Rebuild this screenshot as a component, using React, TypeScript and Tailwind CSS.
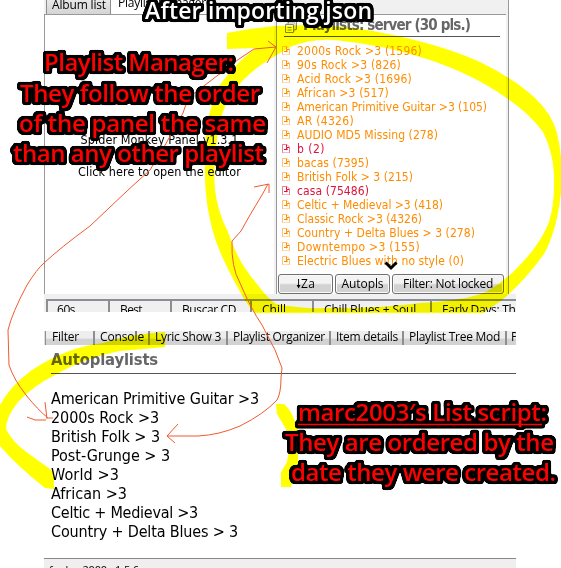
import { useLayoutEffect, useRef } from 'react';

const tahoma = "font-['DejaVu_Sans_Condensed','DejaVu_Sans',sans-serif]";
const segoe = "font-['Open_Sans','Noto_Sans',sans-serif]";

/** Text whose tracking is adjusted so that it spans a given width. */
function Fit({ w, text, className = '' }: { w: number; text: string; className?: string }) {
  const ref = useRef<HTMLSpanElement>(null);
  useLayoutEffect(() => {
    const el = ref.current;
    if (!el) return;
    el.style.letterSpacing = '0px';
    const natural = el.getBoundingClientRect().width;
    el.style.letterSpacing = `${(w - natural) / text.length}px`;
  }, [w, text]);
  return (
    <span ref={ref} className={`inline-block whitespace-pre ${className}`}>
      {text}
    </span>
  );
}

const playlists: [string, number, boolean?][] = [
  ['2000s Rock >3 (1596)', 125],
  ['90s Rock >3 (826)', 104],
  ['Acid Rock >3 (1696)', 115],
  ['African >3 (517)', 92],
  ['American Primitive Guitar >3 (105)', 190],
  ['AR (4326)', 57],
  ['AUDIO MD5 Missing (278)', 141],
  ['b (2)', 28, true],
  ['bacas (7395)', 72],
  ['British Folk > 3 (215)', 116],
  ['casa (75486)', 72, true],
  ['Celtic + Medieval >3 (418)', 146],
  ['Classic Rock >3 (4326)', 125],
  ['Country + Delta Blues > 3 (278)', 178],
  ['Downtempo >3 (155)', 123],
  ['Electric Blues with no style (0)', 167],
];

const autoplaylists: [string, number][] = [
  ['American Primitive Guitar >3', 208],
  ['2000s Rock >3', 108],
  ['British Folk > 3', 109],
  ['Post-Grunge > 3', 119],
  ['World >3', 68],
  ['African >3', 76],
  ['Celtic + Medieval >3', 147],
  ['Country + Delta Blues > 3', 187],
];

function FileIcon() {
  return (
    <svg className="mr-[7px] h-[9px] w-[8px] shrink-0" viewBox="0 0 8 9" fill="none" stroke="currentColor">
      <path d="M.5 8.5V.5H5L7.500 3V8.5" strokeOpacity=".55" />
      <path d="M4.500 1V3.500H7M2 5.500H5.500" />
      <path d="M4 3.500L6 5L4 6.500Z" fill="currentColor" stroke="none" />
      <path d="M0 8.500H8" strokeOpacity=".3" />
    </svg>
  );
}

function StackIcon() {
  return (
    <svg className="mt-[6px] h-3 w-3 shrink-0" viewBox="0 0 12 12" fill="none" stroke="#888">
      <path d="M3.500 2.500V.5H11.500V8.500H9.500M.5 3.500H8.500V11.500H.5ZM2.500 6.500H6.500M2.500 9H6.500" />
      <path d="M2 3V2H10V10H9" strokeOpacity=".6" />
    </svg>
  );
}

function PanelButton({ width, label, w }: { width: string; label: string; w: number }) {
  return (
    <button
      className={`${width} ${segoe} flex h-[20px] items-center justify-center rounded-[3px] border border-[#707070] bg-linear-to-b from-[#f3f3f3] from-45% to-[#d2d2d2] to-55% text-[12px] leading-none text-black shadow-[inset_0_0_0_1px_#fafafa]`}
    >
      <Fit w={w} text={label} />
    </button>
  );
}

const bottomTabs: [string, string, number][] = [
  ['60s', 'w-[62px] pl-[9px]', 18],
  ['Best', 'w-[62px] pl-[10px]', 22],
  ['Buscar CD', 'w-[80px] pl-[10px]', 54],
  ['Chill', 'w-[62px] pl-[10px]', 24],
  ['Chill Blues + Soul', 'w-[118px] pl-[10px]', 92],
  ['Early Days: The', 'w-[88px] pl-[10px]', 80],
];

const panelTabs: [string, string, number][] = [
  ['Filter', 'w-[48px] pl-[6px]', 27],
  ['Console', 'w-[55px] pl-[5px]', 44],
  ['Lyric Show 3', 'w-[78px] pl-[5px]', 66],
  ['Playlist Organizer', 'w-[103px] pl-[5px]', 92],
  ['Item details', 'w-[73px] pl-[5px]', 62],
  ['Playlist Tree Mod', 'w-[103px] pl-[5px]', 91],
  ['P', 'w-[11px] pl-[4px]', 7],
];

const captions: [string, number, number, number][] = [
  ['Playlist Manager:', 44, 71, 190],
  ['They follow the order', 20, 101.5, 240],
  ['of the panel the same', 19, 131.5, 247],
  ['than any other playlist', 13, 162, 251],
  ['marc2003′s List script:', 298, 421, 249],
  ['They are ordered by the', 285, 451, 269],
  ['date they were created.', 291, 481, 265],
];

export default function App() {
  return (
    <main className="relative isolate flex h-[568px] w-[561px] flex-col overflow-hidden bg-white text-black">
      {/* Upper window */}
      <section className="ml-[44px] flex h-[313px] w-[472px] flex-col overflow-hidden">
        <div className={`${segoe} flex h-[14px] w-[465px] border-r border-[#999] bg-[#f0f0f0] pl-[2px] text-[12px]`}>
          <div className="flex h-full w-[65px] border-x border-[#8c8e96] bg-linear-to-b from-[#e8e8e8] to-[#d4d4d4] pl-[5px] leading-[10px]">
            <Fit w={54} text="Album list" />
          </div>
          <div className="h-full w-[102px] border-r border-[#8c8e96] bg-white pl-[7px] leading-[6px]">
            <Fit w={88} text="Playlist Manager" />
          </div>
        </div>
        <div className="flex h-[281px]">
          <div className={`${tahoma} flex w-[230px] flex-col items-center border-l border-t border-[#999] pt-[109px] text-[12.5px] leading-[32px]`}>
            <Fit w={158} text="Spider Monkey Panel v1.3.1" />
            <Fit w={163} text="Click here to open the editor" />
          </div>
          <div className="w-[2px] bg-[#f0f0f0]" />
          <div className="flex w-[230px] flex-col border-l border-t border-[#999]">
            <header className="ml-[7px] flex h-[22px] w-[216px] border-b border-[#555] pl-[1px]">
              <StackIcon />
              <h2 className={`${tahoma} ml-[6px] pt-[1px] text-[15px] font-bold leading-[18px] text-[#666]`}>
                <Fit w={167} text="Playlists: server (30 pls.)" />
              </h2>
            </header>
            <ul className={`${tahoma} ml-[5px] pt-[7px] text-[12px]`}>
              {playlists.map(([name, w, locked]) => (
                <li key={name} className={`flex h-[14px] items-center leading-[14px] ${locked ? 'text-[#dc143c]' : 'text-[#ff8c00]'}`}>
                  <FileIcon />
                  <Fit w={w} text={name} />
                </li>
              ))}
            </ul>
            <div className="ml-px mt-[6px] flex gap-[2px]">
              <PanelButton width="w-[55px]" label="🠗Za" w={20} />
              <PanelButton width="w-[55px]" label="Autopls" w={42} />
              <PanelButton width="w-[112px]" label="Filter: Not locked" w={90} />
            </div>
          </div>
          <div className="w-[3px] border-r border-[#999] bg-[#f0f0f0]" />
        </div>
        <div className="flex h-[18px] flex-col bg-[#f0f0f0] pl-[2px] pt-[5px]">
          <div className={`${segoe} flex h-[13px] overflow-hidden border-t-2 border-[#8c8e96] text-[12px] leading-[18px]`}>
            {bottomTabs.map(([name, cls, w]) => (
              <div key={name} className={`${cls} shrink-0 overflow-hidden border-l-2 border-[#8c8e96] bg-[#f0f0f0]`}>
                <Fit w={w} text={name} />
              </div>
            ))}
          </div>
        </div>
      </section>

      {/* Lower window */}
      <section className="ml-[44px] mt-[19px] flex w-[472px] flex-col">
        <nav className={`${segoe} flex h-[14px] overflow-hidden bg-[#dedede] text-[12px] leading-[11px]`}>
          {panelTabs.map(([name, cls, w], i) => (
            <div
              key={name}
              className={`${cls} shrink-0 overflow-hidden bg-linear-to-b from-[#eee] from-50% to-[#d2d2d2] to-60% ${i === 0 ? 'ml-px border-l border-[#8c8e96]' : 'border-l-2 border-[#8c8e96]'}`}
            >
              <Fit w={w} text={name} />
            </div>
          ))}
        </nav>
        <h1 className={`${tahoma} ml-[7px] h-[29px] border-b border-[#555] pt-[5px] text-[16.5px] font-bold leading-[20px] text-[#666]`}>
          <Fit w={107} text="Autoplaylists" />
        </h1>
        <ul className={`${tahoma} ml-[7px] pt-[15px] text-[16px] leading-[19px]`}>
          {autoplaylists.map(([name, w]) => (
            <li key={name} className="h-[19px]">
              <Fit w={w} text={name} />
            </li>
          ))}
        </ul>
        <footer className={`${segoe} mt-[17px] h-[10px] overflow-hidden border-t border-[#888] bg-[#f0eeee] pl-[5px] pt-[4px] text-[11px] leading-[14px]`}>
          <Fit w={90} text="foobar2000 v1.5.6" />
        </footer>
      </section>

      {/* Highlighter marks */}
      <svg className="pointer-events-none absolute inset-0 mix-blend-multiply" width="561" height="568" fill="#ff0">
        <path
          fillRule="evenodd"
          d="M227 33L250 29L275 26L310 25Q350 26 383 33Q440 44 480 62Q515 79 535 98Q552 114 557 133Q561 150 562 170Q562 195 557 218Q552 240 544 254Q529 275 512 291Q500 303 488 309L484 313H255Q246 304 238 288Q220 256 213 232Q204 200 205 165Q204 130 211 108Q215 91 222 82Q238 61 256 48L227 49Z M270 59Q246 74 235 90Q219 111 217 140Q213 167 215 190Q218 213 228 232Q238 263 258 285Q267 298 276 304Q300 309 330 308Q375 309 420 303Q464 301 486 292Q504 282 518 267Q540 245 549 222Q555 203 554 175Q553 152 543 132Q529 113 505 97Q474 75 430 60Q385 45 335 40Q312 38 290 47Z"
        />
        <path d="M165 332Q130 334 103 343Q67 347 32 370Q10 386 0 405V446Q16 465 45 488L54 489V472L25 451Q12 441 6 429Q6 417 18 402Q33 386 55 375Q83 358 120 351L165 347Z" />
        <path d="M276 404H284Q292 410 298 430V463L291 487H281V472L287 462Q291 445 286 429L277 414Z" />
      </svg>

      {/* Hand-drawn arrows, scroll chevron and captions */}
      <svg className="pointer-events-none absolute inset-0" width="561" height="568" fill="none">
        <defs>
          <filter id="outline" filterUnits="userSpaceOnUse" x="0" y="0" width="561" height="568" colorInterpolationFilters="sRGB">
            <feMorphology in="SourceAlpha" operator="dilate" radius="2" />
            <feGaussianBlur stdDeviation="1" />
            <feComponentTransfer result="halo">
              <feFuncA type="linear" slope="8" intercept="-0.6" />
            </feComponentTransfer>
            <feMerge>
              <feMergeNode in="halo" />
              <feMergeNode in="SourceGraphic" />
            </feMerge>
          </filter>
        </defs>
        <g stroke="#f15a30" strokeWidth="1">
          <path d="M53 418L48 418Q38 410 26 395Q14 380 9 365L8 330Q12 313 27 285Q37 269 44 263Q60 248 90 226L127 191L150 170L164 147L183 113Q188 96 196 92L239 59L254 49L276 47" />
          <path d="M268 41L276 47L267 63M45 402L47 419M27 417L35 420H46" />
          <path d="M167 436H198Q219 435 240 426Q264 414 277 400Q281 393 281 378L282 368L275 350L262 325Q251 309 240 283Q231 267 232 241L241 231L250 215L262 195L268 184" />
          <path d="M254 187L269 184V193M178 424L167 436L175 443" />
        </g>
        <path d="M385.500 262.500L391 268L396.500 262.500" stroke="#000" strokeWidth="3" />
        <g className={`${segoe} text-[24px] font-semibold`} filter="url(#outline)">
          <text x="145" y="18.5" textLength="227" fill="#fff" className="text-[23px]">
            After importing json
          </text>
          {captions.map(([text, x, y, len]) => (
            <text key={text} x={x} y={y} textLength={len} fill="#f00">
              {text}
            </text>
          ))}
          <path d="M298 424.500H542" stroke="#f00" strokeWidth="1.5" />
        </g>
      </svg>
    </main>
  );
}
